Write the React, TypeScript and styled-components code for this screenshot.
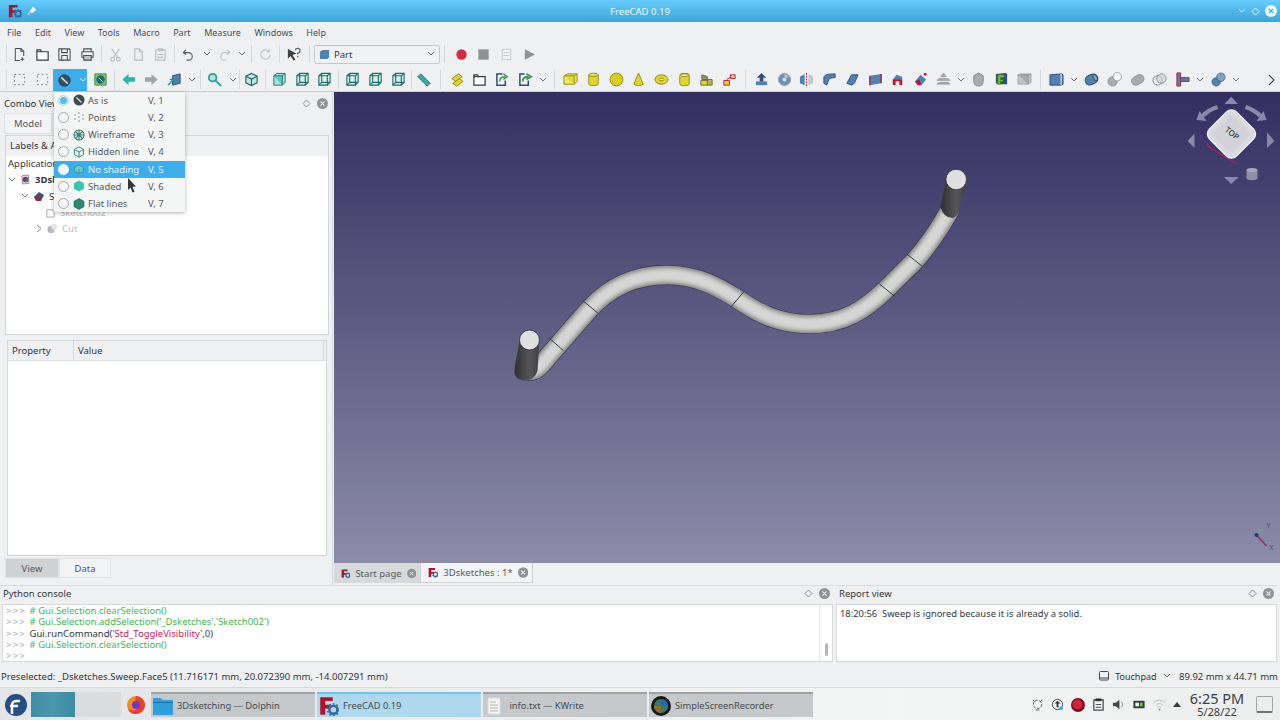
import React from 'react';
import styled, { createGlobalStyle } from 'styled-components';

const GlobalStyle = createGlobalStyle`
  html, body { margin: 0; padding: 0; background: #eff0f1; }
  * { box-sizing: border-box; }
  body { font-family: "Noto Sans", "DejaVu Sans", sans-serif; font-size: 9.5px; color: #31363b; }
`;

const Window = styled.div`
  position: relative;
  width: 1280px;
  height: 720px;
  overflow: hidden;
  display: flex;
  flex-direction: column;
  background: #eff0f1;
`;

const TitleBar = styled.div`
  height: 22px;
  flex-shrink: 0;
  display: flex;
  align-items: center;
  padding: 0 3px 0 8px;
  background: linear-gradient(#66ccfd, #3aa5d6);
  color: #f2fbff;
`;

const TitleText = styled.div`
  flex: 1;
  text-align: center;
  margin-left: 5px;
`;

const TitleButtons = styled.div`
  display: flex;
  align-items: center;
  gap: 5px;
`;

const MenuBar = styled.div`
  height: 21px;
  flex-shrink: 0;
  display: flex;
  align-items: center;
  padding-left: 7px;
  gap: 13.5px;
  font-size: 9px;
`;

const MenuEntry = styled.span`
  color: #4a4f54;
`;

const ToolRow = styled.div<{ $height: number; $lower?: boolean }>`
  height: ${p => p.$height}px;
  flex-shrink: 0;
  display: flex;
  align-items: center;
  padding: ${p => (p.$lower ? '2px 5px 0 4px' : '0 4px 1px 4px')};
  border-bottom: ${p => (p.$lower ? '1px solid #c9ccd0' : 'none')};
`;

const ToolBtn = styled.div`
  width: 22.7px;
  height: 22px;
  flex-shrink: 0;
  display: flex;
  align-items: center;
  justify-content: center;
`;

const ActiveTool = styled.div`
  display: flex;
  align-items: center;
  align-self: stretch;
  margin-top: 1px;
  width: 34px;
  margin-right: 2px;
  background: #3daee9;
`;

const Chevron = styled.div`
  width: 13px;
  flex-shrink: 0;
  display: flex;
  align-items: center;
  justify-content: center;
`;

const ToolSep = styled.div<{ $w: number }>`
  width: ${p => p.$w}px;
  flex-shrink: 0;
  align-self: stretch;
  display: flex;
  justify-content: center;
  padding: 2px 0;

  &::after {
    content: '';
    width: 1px;
    background: #d6d8da;
  }
`;

const MoreArrow = styled.div`
  margin-left: auto;
  display: flex;
`;

const WorkbenchBox = styled.div`
  width: 126px;
  height: 19px;
  flex-shrink: 0;
  display: flex;
  align-items: center;
  gap: 4px;
  padding: 0 4px;
  border: 1px solid #c6c9cc;
  border-radius: 2px;
  background: #f1f2f3;
`;

const WorkbenchName = styled.span`
  flex: 1;
`;

const Workspace = styled.div`
  height: 493px;
  flex-shrink: 0;
  display: flex;
`;

const LeftDock = styled.div`
  width: 333px;
  flex-shrink: 0;
  display: flex;
  flex-direction: column;
  padding: 1px 2px 4px 2px;
  border-right: 1px solid #d8dadc;
`;

const DockHead = styled.div`
  height: 20px;
  flex-shrink: 0;
  display: flex;
  align-items: center;
  padding: 0 2px;
  gap: 6px;
`;

const DockTitle = styled.span`
  flex: 1;
`;

const ModelFrame = styled.div`
  flex: 1;
  display: flex;
  flex-direction: column;
  min-height: 0;
`;

const TabStrip = styled.div`
  height: 22px;
  flex-shrink: 0;
  display: flex;
  margin-left: 2px;
  padding-bottom: 1px;
`;

const PanelTab = styled.div<{ $active?: boolean; $w: number }>`
  width: ${p => p.$w}px;
  display: flex;
  align-items: center;
  justify-content: center;
  background: ${p => (p.$active ? '#f2f3f4' : '#cfd2d3')};
  border: 1px solid #e0e2e4;
  color: #555a5f;
`;

const TreeBox = styled.div`
  height: 200px;
  flex-shrink: 0;
  margin-left: 3px;
  margin-right: 1px;
  display: flex;
  flex-direction: column;
  background: #fff;
  border: 1px solid #d2d4d6;
`;

const TreeHeader = styled.div`
  height: 19.5px;
  flex-shrink: 0;
  display: flex;
  align-items: center;
  padding-left: 4px;
  background: #eff0f1;
`;

const TreeRow = styled.div<{ $indent: number; $faded?: boolean }>`
  height: 16.25px;
  display: flex;
  align-items: center;
  gap: 4px;
  padding-left: ${p => p.$indent}px;
  color: ${p => (p.$faded ? '#b8babc' : '#31363b')};
  white-space: nowrap;
`;

const TreeBold = styled.b`
  font-weight: 700;
`;

const PropertyBox = styled.div`
  height: 216px;
  flex-shrink: 0;
  margin: 5px 3px 0 5px;
  display: flex;
  flex-direction: column;
  background: #fff;
  border: 1px solid #d2d4d6;
`;

const PropertyHead = styled.div`
  height: 20px;
  flex-shrink: 0;
  display: flex;
  background: #eff0f1;
  border-bottom: 1px solid #dfe0e2;
`;

const PropertyCol = styled.div<{ $w: number }>`
  width: ${p => p.$w}px;
  display: flex;
  align-items: center;
  padding-left: 4px;
  border-right: 1px solid #d6d8da;
`;

const BottomTabs = styled.div`
  height: 20px;
  flex-shrink: 0;
  display: flex;
  margin: 2px 0 0 3px;
`;

const CenterColumn = styled.div`
  flex: 1;
  min-width: 0;
  padding-left: 1px;
  display: flex;
  flex-direction: column;
`;

const Viewport = styled.div`
  position: relative;
  height: 471px;
  flex-shrink: 0;
  background: linear-gradient(#332e60, #8c8ca8);
`;

const ViewSvg = styled.svg`
  display: block;
  width: 100%;
  height: 100%;
`;

const DocTabs = styled.div`
  height: 20px;
  display: flex;
`;

const DocTab = styled.div<{ $active?: boolean; $w: number }>`
  width: ${p => p.$w}px;
  display: flex;
  align-items: center;
  gap: 5px;
  padding: 0 4px 0 7px;
  color: #565b60;
  background: ${p => (p.$active ? '#f3f4f5' : '#d7d9db')};
  border-right: 1px solid #d0d2d4;
  border-bottom: ${p => (p.$active ? '1px solid #d0d2d4' : 'none')};
`;

const DocTabName = styled.span`
  flex: 1;
  white-space: nowrap;
`;

const BottomDocks = styled.div`
  height: 77px;
  flex-shrink: 0;
  display: flex;
  gap: 3px;
`;

const BottomPanel = styled.div<{ $w: number }>`
  width: ${p => p.$w}px;
  flex-shrink: 0;
  display: flex;
  flex-direction: column;
  border-top: 1px solid #d8dadc;
`;

const PanelHead = styled(DockHead)`
  height: 18px;
  padding: 0 3px 3px 3px;
`;

const PanelBody = styled.div<{ $inset: number }>`
  flex: 1;
  display: flex;
  margin-left: ${p => p.$inset}px;
  background: #fff;
  border: 1px solid #d6d8da;
  min-height: 0;
`;

const ConsoleText = styled.div`
  flex: 1;
  padding-left: 3px;
  line-height: 11.3px;
  font-size: 9.5px;
  white-space: pre;
`;

const Prompt = styled.span`
  color: #a5a8ab;
  letter-spacing: 1.2px;
`;

const Green = styled.span`
  color: #3fb650;
`;

const Red = styled.span`
  color: #c3235b;
`;

const Navy = styled.span`
  color: #2a3f9d;
`;

const ScrollTrack = styled.div`
  width: 13px;
  flex-shrink: 0;
  display: flex;
  align-items: flex-end;
  justify-content: center;
  padding-bottom: 5px;
  border-left: 1px solid #e4e5e7;
`;

const ScrollThumb = styled.div`
  width: 3px;
  height: 13px;
  border-radius: 2px;
  background: #b4b7ba;
`;

const ReportText = styled.div`
  padding: 2px 3px;
  font-size: 9.4px;
  white-space: pre;
`;

const StatusBar = styled.div`
  height: 26px;
  flex-shrink: 0;
  display: flex;
  align-items: center;
  padding: 3px 2px 0 1px;
  border-bottom: 1px solid #d4d6d8;
`;

const StatusText = styled.span`
  flex: 1;
`;

const StatusRight = styled.div`
  display: flex;
  align-items: center;
  gap: 6px;
`;

const TouchLabel = styled.span`
  font-size: 9px;
`;

const TaskBar = styled.div`
  flex: 1;
  display: flex;
  align-items: stretch;
  padding: 4px 0 3px 3px;
  background: linear-gradient(90deg, #e3e5e6, #f4f5f5 70%, #eceded);
`;

const Launcher = styled.div<{ $w: number }>`
  width: ${p => p.$w}px;
  flex-shrink: 0;
  display: flex;
  align-items: center;
  justify-content: center;
`;

const Pager = styled.div`
  width: 90px;
  margin-left: 3px;
  flex-shrink: 0;
  display: flex;
  background: #d9dbdd;
`;

const PagerActive = styled.div`
  width: 44px;
  background: linear-gradient(90deg, #3f8da6, #4a96ad 50%, #3d8aa3);
`;

const TaskItem = styled.div<{ $active?: boolean }>`
  width: 164px;
  flex-shrink: 0;
  display: flex;
  align-items: center;
  gap: 4px;
  margin-right: 2px;
  padding-left: 2px;
  font-size: 9.3px;
  color: #444a4f;
  background: ${p => (p.$active ? '#b0d8ec' : '#c6c9cb')};
  border-top: 2px solid ${p => (p.$active ? '#72c4ee' : '#a0a3a6')};
`;

const Tray = styled.div`
  margin-left: auto;
  display: flex;
  align-items: center;
  padding-right: 7px;
`;

const TrayIcons = styled.div`
  display: flex;
  align-items: center;
  gap: 7px;
  margin-right: 7px;
`;

const Clock = styled.div`
  width: 58px;
  display: flex;
  flex-direction: column;
  align-items: center;
  margin-top: -2px;
  color: #3b4045;
`;

const ClockTime = styled.span`
  font-size: 14.5px;
  line-height: 14px;
`;

const ClockDate = styled.span`
  font-size: 11px;
  line-height: 11px;
  margin-top: 1px;
`;

const ShowDesktop = styled.div`
  width: 17px;
  height: 17px;
  margin-left: 10px;
  border: 1px solid #a3a6a9;
  border-bottom: 2px solid #6d7174;
  border-radius: 2px;
`;

const DisplayPopup = styled.div`
  position: absolute;
  left: 54px;
  top: 91.5px;
  width: 131px;
  background: #f4f5f5;
  box-shadow: 0 1px 4px rgba(0, 0, 0, 0.3);
  display: flex;
  flex-direction: column;
`;

const PopupRow = styled.div<{ $active?: boolean }>`
  height: 17.25px;
  display: grid;
  grid-template-columns: 15px 15px 60px 1fr;
  align-items: center;
  padding-left: 4px;
  color: ${p => (p.$active ? '#e7f5fc' : '#54595e')};
  background: ${p => (p.$active ? '#3daee9' : 'transparent')};
`;

const Radio = styled.div<{ $on?: boolean; $white?: boolean }>`
  width: 11px;
  height: 11px;
  border-radius: 50%;
  background: ${p => (p.$white ? '#f5f8fa' : p.$on ? '#5dbbe4' : '#f7f7f7')};
  border: 1px solid ${p => (p.$on ? '#bfe2f3' : p.$white ? '#f5f8fa' : '#a4a7aa')};
  box-shadow: ${p => (p.$on ? 'inset 0 0 0 1px #e8f5fb' : 'none')};
`;

const MouseArrow = styled.svg`
  position: absolute;
  left: 127px;
  top: 178px;
  width: 10px;
  height: 15px;
`;

type IconProps = { kind: string; size?: number };

const yellow = '#e3d42c';
const yellowD = '#8f8a1c';
const teal = '#2aa198';
const tealD = '#1f6d69';
const blue = '#4f82b4';
const blueD = '#2f4f74';
const gray = '#a9abad';
const grayD = '#808385';
const crimson = '#b01c3a';

const Icon = ({ kind, size = 15 }: IconProps) => {
  const art: Record<string, React.ReactNode> = {
    doc: <path d="M3.5 1.5h6l3 3v5M3.5 1.5v13h5M9.5 1.5v3h3M11 11v4M9 13h4" fill="none" stroke="#4a4f54" strokeWidth="1.1" />,
    folder: <path d="M2 3h4l1 2h7v9H2zM2 5h5" fill="#fff" stroke="#33383c" strokeWidth="1.2" />,
    save: <g fill="none" stroke="#4a4f54" strokeWidth="1.1"><path d="M2 2h11l1 1v11H2z" /><path d="M5 2v4h6V2M5 14V9h6v5" /></g>,
    print: <g fill="none" stroke="#4a4f54" strokeWidth="1.1"><path d="M4 5V2h8v3M4 11H2V5h12v6h-2" /><path d="M4 9h8v5H4z" fill="#3a3f44" fillOpacity=".25" /></g>,
    cut: <g fill="none" stroke="#b9bbbd" strokeWidth="1.2"><path d="M4 2l6 9M12 2l-6 9" /><circle cx="5" cy="13" r="2" /><circle cx="11" cy="13" r="2" /></g>,
    copy: <g fill="none" stroke="#b9bbbd" strokeWidth="1.2"><path d="M4 2h5l3 3v9H4z" /><path d="M9 2v3h3" /></g>,
    paste: <g fill="none" stroke="#b9bbbd" strokeWidth="1.2"><path d="M3 3h10v11H3z" /><path d="M6 2h4v2H6zM5 8h6M5 11h6" /></g>,
    undo: <path d="M5 3L2.5 6 5.5 8M3 6h5a4 4 0 0 1 0 8H6" fill="none" stroke="#55595d" strokeWidth="1.2" />,
    redo: <path d="M11 3l2.5 3-3 2M13 6H8a4 4 0 0 0 0 8h2" fill="none" stroke="#c1c3c5" strokeWidth="1.2" />,
    refresh: <path d="M13 8a5 5 0 1 1-1.5-3.5M12 2v3H9" fill="none" stroke="#c1c3c5" strokeWidth="1.2" />,
    help: <g><path d="M2 2l9 5-4 1.5 3 5-2 1-3-5-3 3z" fill="#3d4348" /><path d="M10 3.5a2.5 2.5 0 1 1 2.5 3v1.5M12.5 9.5v1.5" fill="none" stroke="#5a6a72" strokeWidth="1.3" /></g>,
    record: <circle cx="8" cy="8" r="5.5" fill="#d8293f" />,
    stop: <rect x="2.5" y="2.5" width="11" height="11" fill="#8f9193" />,
    macro: <g fill="#f4f4f4" stroke="#c3c5c7"><path d="M3.5 2.5h9v11h-9z" /><path d="M5 6h6M5 9h6" /></g>,
    play: <path d="M3 2.5l11 5.5-11 5.5z" fill="#8f9193" />,
    selA: <rect x="2.5" y="2.5" width="11" height="11" fill="none" stroke="#7b7f83" strokeDasharray="2 2.5" />,
    mode: <g><circle cx="8" cy="8" r="6" fill="#3c4f5c" stroke="#24343e" /><path d="M4.5 4.5l7 7" stroke="#d8e8f0" strokeWidth="1.6" /></g>,
    sync: <g><path d="M2 2h12v12H2z" fill="#7ec27a" stroke="#3f8b3f" /><circle cx="8" cy="8" r="4.5" fill="#1f6d69" /><path d="M6 6l5 5" stroke="#bfe" /></g>,
    back: <path d="M8 2L1.5 8 8 14v-3.5h7v-5H8z" fill="#2bb7a4" />,
    forward: <path d="M8 2l6.5 6L8 14v-3.5H1v-5h7z" fill="#a2a4a6" />,
    workbench: <g><path d="M6 4l8-2v10l-8 2z" fill={blue} stroke={blueD} /><path d="M1 14l5-5M3 8h3v3" fill="none" stroke="#1f8f8f" strokeWidth="1.5" /></g>,
    zoom: <g fill="none" stroke={teal} strokeWidth="2"><circle cx="6" cy="6" r="4" fill="#b2e5df" /><path d="M9 9l6 6" /></g>,
    iso: <g fill="none" stroke={tealD} strokeWidth="1.2"><path d="M8 1.5l6 3v7l-6 3-6-3v-7z" fill="#bfe6e1" /><path d="M2 4.5l6 3 6-3M8 7.5v7" /></g>,
    front: <g stroke={tealD} strokeWidth="1"><path d="M2 4l3-2.5h9V11l-3 3H2z" fill="#a8e6de" /><path d="M2 4h9v10M11 4l3-2.5" fill="#57cabd" /></g>,
    wire: <g fill="none" stroke={tealD} strokeWidth="1.2"><path d="M2 4l3-2.5h9V11l-3 3H2z" fill="#d5f2ee" /><path d="M2 4h9v10M11 4l3-2.5M5 1.5V11H14M5 11l-3 3" /></g>,
    ruler: <g><path d="M2 5l3-3 10 10-3 3z" fill="#37b0a6" stroke={tealD} /></g>,
    part: <g stroke={yellowD}><path d="M2 7l7-5 4 3-7 5z" fill={yellow} /><path d="M3 12l7-5 4 3-7 5z" fill={yellow} /></g>,
    group: <g fill="none" stroke="#34393d" strokeWidth="1.3"><path d="M2 3h4l1 2h7v9H2z" fill="#fff" /><path d="M2 5h5" /></g>,
    link: <g fill="none" stroke={blueD} strokeWidth="1.6"><path d="M11 9v5H2V2h6" /><path d="M5 10c0-4 3-5 6-5M9 2l4 3-4 3" stroke="#3e9a5a" /></g>,
    link2: <g fill="none" stroke={blueD} strokeWidth="1.6"><path d="M11 9v5H2V2h5" /><path d="M5 10c0-4 3-5 6-5M9 2l5 3-5 3" stroke="#3e9a5a" strokeWidth="2" /></g>,
    box: <g stroke={yellowD}><path d="M1 4l4-2h10v8l-3 3H1z" fill="#f2e85a" /><path d="M1 4h11v9M12 4l3-2" fill="#e4d533" /></g>,
    cyl: <g stroke={yellowD}><path d="M3 3v10c0 2 10 2 10 0V3z" fill={yellow} /><ellipse cx="8" cy="3" rx="5" ry="1.7" fill="#f2e85a" /></g>,
    sphere: <circle cx="8" cy="8" r="6.8" fill="#dccb24" stroke={yellowD} />,
    cone: <path d="M8 1l5 12c-2 2-8 2-10 0z" fill={yellow} stroke={yellowD} />,
    torus: <g><ellipse cx="8" cy="8" rx="7" ry="5" fill={yellow} stroke={yellowD} /><ellipse cx="8" cy="8" rx="2.5" ry="1.3" fill="#f4f4e4" stroke={yellowD} /></g>,
    tube: <g stroke={yellowD}><rect x="3" y="1.5" width="10" height="13" rx="2.5" fill={yellow} /><ellipse cx="8" cy="3.5" rx="4" ry="1.4" fill="#fff9b0" /></g>,
    prims: <g stroke="#6b6a3a"><path d="M2 9h7v5H2z" fill={yellow} /><path d="M9 8h5v6H9z" fill="#b9b35a" /><path d="M3 3l6 2v3H3z" fill="#8f8f7a" /></g>,
    shapes: <g stroke={crimson}><path d="M2 9h6v5H2z" fill={yellow} /><path d="M9 3h5v4H9z" fill="#e8d870" /><path d="M5 8l5-3" fill="none" /></g>,
    extrude: <g><path d="M2 10h12v4H2z" fill={blue} /><path d="M8 1l5 5h-3v4H6V6H3z" fill={blueD} /></g>,
    revolve: <g><circle cx="8" cy="8" r="6.5" fill="#6d8fb4" stroke="#92a2b5" /><circle cx="8" cy="8" r="2" fill="#e8ecf0" /><path d="M8 2a6 6 0 0 1 5 3l-5 3z" fill="#b7bfc8" /></g>,
    mirror: <g><path d="M1 5l5-3v12l-5-2z" fill={blue} /><path d="M8 1v14" stroke={crimson} strokeDasharray="2 1" /><path d="M15 5l-5-3v12l5-2z" fill="#c2c6ca" /></g>,
    fillet: <path d="M2 12V6c0-3 4-4 12-4v4c-4 0-7 1-7 3l-2 5z" fill={blue} stroke={blueD} />,
    chamfer: <path d="M2 12l5-9h7l-4 9-3 2z" fill={blue} stroke={blueD} />,
    ruled: <g><path d="M2 4l12-2v10L2 14z" fill={blue} /><path d="M2 4v10M14 2v10" stroke={crimson} strokeWidth="1.5" /></g>,
    loft: <g><path d="M3 8l4-5 6 2v8H3z" fill={blue} /><path d="M3 8h10v6H3z" fill={crimson} /><path d="M6 10h4v4H6z" fill="#f0f0f0" /></g>,
    sweep: <g><path d="M2 10l6-7 6 5-5 6z" fill={blue} /><path d="M2 10l3 4h4l-2-6z" fill={crimson} /><circle cx="13" cy="2.5" r="1.5" fill={crimson} /></g>,
    offset: <g fill={gray} stroke={grayD} strokeWidth=".5"><path d="M8 1l3 4H5zM3 7h10l2 2H1zM3 11h10l2 2H1z" /></g>,
    thick: <path d="M3 4l5-3 5 3v6c0 3-2 5-5 5s-5-2-5-5z" fill={gray} stroke={grayD} />,
    face: <g><path d="M2 2l10-1 2 1v11H4l-2-1z" fill={blueD} /><path d="M4 3h7v3H7v2h3v2H7v3H4z" fill="#6fc22c" stroke="#2a5a10" strokeWidth=".5" /></g>,
    graybox: <g stroke={grayD} strokeWidth=".6"><path d="M1 3l3-1h11v9l-3 2H1z" fill="#c3c4c6" /><path d="M1 3h11v10M12 3l3-1" fill="#a6a8aa" /></g>,
    bluebox: <g><path d="M1 3l12-1 2 1v10l-2 1H1z" fill={blue} stroke={blueD} /><path d="M13 2v12" stroke="#c4ccd4" strokeWidth="1.5" /></g>,
    bool: <g stroke={blueD}><rect x="1" y="3" width="14" height="10" rx="5" transform="rotate(-25 8 8)" fill={blue} /><ellipse cx="12" cy="6" rx="2" ry="3.5" transform="rotate(-25 12 6)" fill="#7fa3c6" /></g>,
    cutB: <g stroke={grayD} strokeWidth=".7"><circle cx="6" cy="10" r="5" fill={gray} /><circle cx="11" cy="5" r="4.5" fill="#f6f6f6" /></g>,
    union: <g><rect x="1" y="4" width="14" height="9" rx="4.5" transform="rotate(-30 8 8)" fill={gray} stroke={grayD} strokeWidth=".7" /></g>,
    common: <g fill="none" stroke={grayD}><circle cx="6" cy="9" r="5" /><circle cx="10" cy="7" r="5" fill="#c7c9cb" fillOpacity=".5" /></g>,
    tee: <g><path d="M2 1h4v14H2z" fill={blue} stroke={crimson} /><path d="M6 6h9v4H6z" fill={blue} stroke={crimson} /></g>,
    joined: <g stroke={blueD} strokeWidth=".7"><circle cx="5.5" cy="10.5" r="4.5" fill={blue} /><circle cx="10.5" cy="5.5" r="4.5" fill="#7fa3c6" /></g>,
  };
  return (
    <svg width={size} height={size} viewBox="0 0 16 16">
      {art[kind]}
    </svg>
  );
};

const ChevronGlyph = ({ color = '#6f7477' }: { color?: string }) => (
  <svg width="8" height="6" viewBox="0 0 8 6">
    <path d="M1 1l3 3 3-3" fill="none" stroke={color} strokeWidth="1" />
  </svg>
);

const CloseDot = ({ size = 11, fill = '#909396', cross = '#eff0f1' }: { size?: number; fill?: string; cross?: string }) => (
  <svg width={size} height={size} viewBox="0 0 12 12">
    <circle cx="6" cy="6" r="6" fill={fill} />
    <path d="M3.8 3.8l4.4 4.4M8.2 3.8l-4.4 4.4" stroke={cross} strokeWidth="1.2" />
  </svg>
);

const FloatDiamond = ({ color = '#8e9194' }: { color?: string }) => (
  <svg width="9" height="9" viewBox="0 0 9 9">
    <path d="M4.5 1l3.5 3.5-3.5 3.5L1 4.5z" fill="none" stroke={color} />
  </svg>
);

const FreeCadLogo = ({ size = 14 }: { size?: number }) => (
  <svg width={size} height={size} viewBox="0 0 16 16">
    <path d="M1 1h10v3H5v3h4v3H5v5H1z" fill="#a8152f" />
    <circle cx="11.5" cy="11" r="3.2" fill="none" stroke="#36689a" strokeWidth="2" />
    <circle cx="11.5" cy="11" r="4.7" fill="none" stroke="#36689a" strokeWidth="1.2" strokeDasharray="1.5 1.5" />
  </svg>
);

const toolsTop: (string | number)[] = [
  4, 'doc', 'folder', 'save', 'print', 5.3, 'cut', 'copy', 'paste', 5.3, 'undo', 'v', 'redo', 'v', 5, 'refresh', 5.3, 'help', 9.5,
];
const toolsPlay = ['record', 'stop', 'macro', 'play'];
const toolsLeft: (string | number)[] = [4, 'selA', 'selA'];
const toolsMain: (string | number)[] = [
  'sync', 5.3, 'back', 'forward', 'workbench', 'v', 5, 'zoom', 'v', 1, 'iso', 5.3,
  'front', 'wire', 'wire', 5.3, 'wire', 'wire', 'wire', 3, 'ruler', 10.5,
  'part', 'group', 'link', 'link2', 'v', 10, 'box', 'cyl', 'sphere', 'cone', 'torus', 'tube', 'prims', 'shapes', 9.3,
  'extrude', 'revolve', 'mirror', 'fillet', 'chamfer', 'ruled', 'loft', 'sweep', 'offset', 'v', 'thick', 'face', 'graybox', 9.3,
  'bluebox', 'v', 'bool', 'cutB', 'union', 'common', 'tee', 'v', 'joined', 'v',
];

const renderTools = (items: (string | number)[]) =>
  items.map((it, i) => {
    if (typeof it === 'number') return <ToolSep key={i} $w={it} />;
    if (it === 'v') return <Chevron key={i}><ChevronGlyph /></Chevron>;
    return <ToolBtn key={i}><Icon kind={it} /></ToolBtn>;
  });

const MENU = ['File', 'Edit', 'View', 'Tools', 'Macro', 'Part', 'Measure', 'Windows', 'Help'];

const DISPLAY_MODES = [
  { icon: 'asis', label: 'As is', key: 'V, 1' },
  { icon: 'points', label: 'Points', key: 'V, 2' },
  { icon: 'wireframe', label: 'Wireframe', key: 'V, 3' },
  { icon: 'hidden', label: 'Hidden line', key: 'V, 4' },
  { icon: 'noshade', label: 'No shading', key: 'V, 5' },
  { icon: 'shaded', label: 'Shaded', key: 'V, 6' },
  { icon: 'flat', label: 'Flat lines', key: 'V, 7' },
];

const ModeGlyph = ({ kind }: { kind: string }) => (
  <svg width="12" height="12" viewBox="0 0 12 12">
    {kind === 'asis' && <g><circle cx="6" cy="6" r="5.5" fill="#3d4a50" /><path d="M3.5 3.5l5 5" stroke="#d5e0e4" strokeWidth="1.2" /></g>}
    {kind === 'points' && <path d="M6 1v2M6 5v2M6 9v2M1 4h2M1 8h2M9 4h2M9 8h2" stroke="#8a9da0" strokeWidth="1" />}
    {kind === 'wireframe' && <g fill="none" stroke="#2f7d70" strokeWidth="1.1"><circle cx="6" cy="6" r="5" /><path d="M1 6h10M6 1v10M2.5 2.5l7 7M9.5 2.5l-7 7" /></g>}
    {kind === 'hidden' && <g fill="none" stroke="#2f8d80" strokeWidth="1"><path d="M6 .8l4.6 2.6v5.2L6 11.2 1.4 8.6V3.4z" /><path d="M1.4 3.4L6 6l4.6-2.6M6 6v5.2" /></g>}
    {kind === 'noshade' && <g fill="none" stroke="#2d9a9a" strokeWidth="1"><path d="M6 2l4.6 2.2v4L6 10.5 1.4 8.2v-4z" fill="#6ccbd0" /><path d="M6 6v4.5" /></g>}
    {kind === 'shaded' && <path d="M6 .5l5 2.8v5.4l-5 2.8-5-2.8V3.3z" fill="#3ac5ad" />}
    {kind === 'flat' && <path d="M6 .5l5 2.8v5.4l-5 2.8-5-2.8V3.3z" fill="#2a8a6e" stroke="#1d6a55" strokeWidth=".6" />}
  </svg>
);

const Scene = () => {
  const spine = 'M531 372 C538 371 543 365 549 357 L590 310 C610 288 635 276 667 276 C700 276 722 290 738 300 C760 315 780 325 810 325 C845 325 866 310 887 290 L915 262 C925 251 938 233 950 212';
  return (
    <ViewSvg viewBox="335 93 945 471">
      <defs>
        <linearGradient id="capBody" x1="0" x2="1" y1="0" y2="0">
          <stop offset="0" stopColor="#2f2f33" />
          <stop offset="0.6" stopColor="#565659" />
          <stop offset="1" stopColor="#414145" />
        </linearGradient>
        <filter id="soft" x="-5%" y="-5%" width="110%" height="110%">
          <feGaussianBlur stdDeviation="1.6" />
        </filter>
      </defs>
      <g fill="none" strokeLinecap="round">
        <path d={spine} stroke="#33334a" strokeWidth="20" />
        <path d={spine} stroke="#8b8b8c" strokeWidth="18.5" />
        <g filter="url(#soft)">
          <path d={spine} stroke="#b9b9b8" strokeWidth="15" />
          <path d={spine} stroke="#d6d6d5" strokeWidth="10" />
        </g>
      </g>
      <g stroke="#25252c" strokeWidth="0.9">
        <path d="M550 339.3L564 351.7M583.3 301.7L598.3 314M744.3 292.7L731.7 307.7M880 285L895.3 297.3M907.3 255L922.7 267.3" />
      </g>
      <path d="M520 342L515 370Q514 381 526 381.5Q535 381 538 372L540 342Z" fill="url(#capBody)" />
      <circle cx="530" cy="341" r="10" fill="#dfdfdf" stroke="#2d2d33" strokeWidth="0.8" />
      <path d="M946 183L941 208Q944 219 953 219Q959 217 960 210L967 183Z" fill="url(#capBody)" />
      <circle cx="956.7" cy="180.5" r="10.3" fill="#dfdfdf" stroke="#2d2d33" strokeWidth="0.8" />

      <g fill="#8b88ad">
        <path d="M1225 105L1231.7 97.7 1238.5 105Z" />
        <path d="M1188 142L1195 134.5 1195 149Z" />
        <path d="M1275 142L1267.5 133.5 1267.5 149Z" />
        <path d="M1224.5 178L1239 178 1231.7 185Z" />
        <path d="M1197 121L1207 122 1200 112Z" />
        <path d="M1267 121L1257 122 1264 112Z" />
      </g>
      <g fill="none" stroke="#8b88ad" strokeWidth="4">
        <path d="M1203 117Q1209 111 1218 108" />
        <path d="M1261 117Q1255 111 1246 108" />
      </g>
      <path d="M1200 134L1210 148 1237 165" fill="none" stroke="#8a2a62" strokeWidth="2" />
      <path d="M1201 134L1208 144" fill="none" stroke="#2c2f9c" strokeWidth="2" />
      <rect x="1213" y="116" width="38" height="38" rx="7" transform="rotate(45 1232 135)" fill="#d9d9df" stroke="#f0eff5" strokeWidth="1.5" />
      <rect x="1218" y="121" width="28" height="28" rx="4" transform="rotate(45 1232 135)" fill="#d2d2d8" />
      <text x="1232" y="137" fontSize="8" fontFamily="Noto Sans, sans-serif" textAnchor="middle" fill="#111" transform="rotate(38 1232 135)">TOP</text>
      <path d="M1247 171v8c0 3 11 3 11 0v-8z" fill="#8f8fa6" />
      <ellipse cx="1252.5" cy="171" rx="5.5" ry="2" fill="#a9a9bb" />

      <path d="M1257 536L1263 530" stroke="#6faa78" strokeWidth="2" />
      <path d="M1257 536L1267 547" stroke="#8f2f5c" strokeWidth="1.5" />
      <circle cx="1257" cy="536" r="2" fill="#2b2f88" />
      <text x="1267" y="529" fontSize="7" fontFamily="Noto Sans, sans-serif" fill="#4c4c62">Y</text>
      <text x="1270" y="551" fontSize="7" fontFamily="Noto Sans, sans-serif" fill="#4c4c62">X</text>
    </ViewSvg>
  );
};

export default function App() {
  return (
    <Window>
      <GlobalStyle />
      <TitleBar>
        <FreeCadLogo />
        <svg width="10" height="10" viewBox="0 0 10 10" style={{ marginLeft: 5 }}>
          <path d="M6 1l3 3-2 1-2 2-2-2 2-2zM3 6L1 9" fill="#e8f6fd" stroke="#e8f6fd" />
        </svg>
        <TitleText>FreeCAD 0.19</TitleText>
        <TitleButtons>
          <ChevronGlyph color="#e4f6ff" />
          <FloatDiamond color="#e4f6ff" />
          <CloseDot size={12} fill="#eaf7fd" cross="#3aa5d6" />
        </TitleButtons>
      </TitleBar>

      <MenuBar>
        {MENU.map(m => <MenuEntry key={m}>{m}</MenuEntry>)}
      </MenuBar>

      <ToolRow $height={23}>
        {renderTools(toolsTop)}
        <WorkbenchBox>
          <svg width="11" height="11" viewBox="0 0 12 12"><path d="M1 3l3-2h7v8l-2 2H1z" fill="#4f82b4" /></svg>
          <WorkbenchName>Part</WorkbenchName>
          <ChevronGlyph />
        </WorkbenchBox>
        <ToolSep $w={10} />
        {renderTools(toolsPlay)}
      </ToolRow>

      <ToolRow $height={26} $lower>
        {renderTools(toolsLeft)}
        <ActiveTool>
          <ToolBtn><Icon kind="mode" /></ToolBtn>
          <Chevron><ChevronGlyph color="#e8f6fd" /></Chevron>
        </ActiveTool>
        {renderTools(toolsMain)}
        <MoreArrow>
          <svg width="8" height="12" viewBox="0 0 8 12"><path d="M2 1l5 5-5 5" fill="none" stroke="#44494d" strokeWidth="1.2" /></svg>
        </MoreArrow>
      </ToolRow>

      <Workspace>
        <LeftDock>
          <DockHead>
            <DockTitle>Combo View</DockTitle>
            <FloatDiamond />
            <CloseDot />
          </DockHead>
          <ModelFrame>
            <TabStrip>
              <PanelTab $active $w={48}>Model</PanelTab>
              <PanelTab $active $w={48}>Tasks</PanelTab>
            </TabStrip>
            <TreeBox>
              <TreeHeader>Labels &amp; Attributes</TreeHeader>
              <TreeRow $indent={2}>Application</TreeRow>
              <TreeRow $indent={2}>
                <ChevronGlyph />
                <svg width="11" height="11" viewBox="0 0 12 12"><path d="M2 2l7-1 1 9-7 1z" fill="#e4e6ea" stroke="#889" /><circle cx="6" cy="6" r="3" fill="#a01c3c" /><circle cx="7" cy="7" r="2" fill="#3c6ca0" /></svg>
                <TreeBold>3Dsketches</TreeBold>
              </TreeRow>
              <TreeRow $indent={15}>
                <ChevronGlyph />
                <svg width="12" height="11" viewBox="0 0 12 11"><path d="M1 6l5-5 5 3-3 6H3z" fill="#3c4f80" /><path d="M1 6l3 4h4L6 5z" fill="#b01c3a" /></svg>
                Sweep
              </TreeRow>
              <TreeRow $indent={39} $faded>
                <svg width="11" height="11" viewBox="0 0 12 12"><path d="M2 3h6l2 2v6H2z" fill="none" stroke="#a0a2a4" /></svg>
                Sketch002
              </TreeRow>
              <TreeRow $indent={30} $faded>
                <svg width="7" height="9" viewBox="0 0 7 9"><path d="M1 1l4 3.5-4 3.5" fill="none" stroke="#808386" /></svg>
                <svg width="11" height="11" viewBox="0 0 12 12"><circle cx="4.5" cy="7" r="4" fill="#b6b8ba" /><circle cx="8" cy="4" r="3.3" fill="#e6e7e8" /></svg>
                Cut
              </TreeRow>
            </TreeBox>
            <PropertyBox>
              <PropertyHead>
                <PropertyCol $w={66}>Property</PropertyCol>
                <PropertyCol $w={250}>Value</PropertyCol>
              </PropertyHead>
            </PropertyBox>
            <BottomTabs>
              <PanelTab $w={54}>View</PanelTab>
              <PanelTab $active $w={52}>Data</PanelTab>
            </BottomTabs>
          </ModelFrame>
        </LeftDock>

        <CenterColumn>
          <Viewport>
            <Scene />
          </Viewport>
          <DocTabs>
            <DocTab $w={87}>
              <FreeCadLogo size={11} />
              <DocTabName>Start page</DocTabName>
              <CloseDot />
            </DocTab>
            <DocTab $active $w={112}>
              <FreeCadLogo size={11} />
              <DocTabName>3Dsketches : 1*</DocTabName>
              <CloseDot />
            </DocTab>
          </DocTabs>
        </CenterColumn>
      </Workspace>

      <BottomDocks>
        <BottomPanel $w={833}>
          <PanelHead>
            <DockTitle>Python console</DockTitle>
            <FloatDiamond />
            <CloseDot />
          </PanelHead>
          <PanelBody $inset={2}>
            <ConsoleText>
              <div><Prompt>&gt;&gt;&gt; </Prompt><Green># Gui.Selection.clearSelection()</Green></div>
              <div><Prompt>&gt;&gt;&gt; </Prompt><Green># Gui.Selection.addSelection('_Dsketches','Sketch002')</Green></div>
              <div><Prompt>&gt;&gt;&gt; </Prompt>Gui.runCommand(<Red>'Std_ToggleVisibility'</Red>,<Navy>0</Navy>)</div>
              <div><Prompt>&gt;&gt;&gt; </Prompt><Green># Gui.Selection.clearSelection()</Green></div>
              <div><Prompt>&gt;&gt;&gt; </Prompt></div>
            </ConsoleText>
            <ScrollTrack><ScrollThumb /></ScrollTrack>
          </PanelBody>
        </BottomPanel>
        <BottomPanel $w={441}>
          <PanelHead>
            <DockTitle>Report view</DockTitle>
            <FloatDiamond />
            <CloseDot />
          </PanelHead>
          <PanelBody $inset={0}>
            <ReportText>18:20:56  Sweep is ignored because it is already a solid.</ReportText>
          </PanelBody>
        </BottomPanel>
      </BottomDocks>

      <StatusBar>
        <StatusText>Preselected: _Dsketches.Sweep.Face5 (11.716171 mm, 20.072390 mm, -14.007291 mm)</StatusText>
        <StatusRight>
          <svg width="10" height="10" viewBox="0 0 10 10"><rect x=".5" y=".5" width="9" height="8.5" rx="1" fill="none" stroke="#44494d" /><path d="M1 7h8" stroke="#44494d" /></svg>
          <TouchLabel>Touchpad</TouchLabel>
          <ChevronGlyph />
          <span>&nbsp;89.92 mm x 44.71 mm</span>
        </StatusRight>
      </StatusBar>

      <TaskBar>
        <Launcher $w={25}>
          <svg width="24" height="24" viewBox="0 0 24 24">
            <circle cx="12" cy="12" r="11" fill="#274d86" />
            <path d="M8 21v-9a4 4 0 0 1 4-4h4M6 13h8" fill="none" stroke="#fff" strokeWidth="2.5" />
          </svg>
        </Launcher>
        <Pager><PagerActive /></Pager>
        <Launcher $w={30}>
          <svg width="20" height="20" viewBox="0 0 20 20">
            <circle cx="10" cy="10" r="9" fill="#f28a1f" />
            <path d="M10 1a9 9 0 0 1 9 9c0 5-4 9-9 9-4 0-7-2-8-5 3 2 8 2 10-1 1-3-1-5-3-5z" fill="#e8402e" />
            <circle cx="10" cy="10" r="4" fill="#6a3bbf" />
          </svg>
        </Launcher>
        <TaskItem>
          <svg width="20" height="18" viewBox="0 0 20 18"><path d="M0 1h8l2 2h10v15H0z" fill="#2e9fd8" /><path d="M0 5h20v1H0z" fill="#1c6d98" /></svg>
          <span>3Dsketching — Dolphin</span>
        </TaskItem>
        <TaskItem $active>
          <FreeCadLogo size={20} />
          <span>FreeCAD 0.19</span>
        </TaskItem>
        <TaskItem>
          <svg width="18" height="18" viewBox="0 0 18 18"><path d="M3 1h12v16H3z" fill="#f4f4f4" stroke="#dcdcdc" /><path d="M5 5h6M5 8h8M5 11h8M5 14h8" stroke="#b8babc" /></svg>
          <span>&nbsp;info.txt  — KWrite</span>
        </TaskItem>
        <TaskItem>
          <svg width="20" height="20" viewBox="0 0 20 20"><circle cx="10" cy="10" r="10" fill="#16191c" /><circle cx="10" cy="10" r="7" fill="#2d7f6a" /><path d="M10 3a7 7 0 0 1 7 7h-7z" fill="#2e62b0" /><path d="M3 10a7 7 0 0 0 7 7v-7z" fill="#9a6a2a" /></svg>
          <span>SimpleScreenRecorder</span>
        </TaskItem>
        <Tray>
          <TrayIcons>
            <svg width="13" height="13" viewBox="0 0 14 14"><circle cx="7" cy="7" r="4.5" fill="none" stroke="#5b6064" strokeDasharray="3 1.5" /><path d="M2 2L4 4M12 2L10 4M5 13h4" stroke="#5b6064" /></svg>
            <svg width="13" height="13" viewBox="0 0 14 14"><circle cx="7" cy="7" r="5.5" fill="none" stroke="#44494d" /><path d="M7 3l3 3H8v4H6V6H4z" fill="#33383c" /><circle cx="11" cy="11" r="2" fill="#3daee9" /></svg>
            <svg width="14" height="14" viewBox="0 0 14 14"><circle cx="7" cy="7" r="7" fill="#7a0c22" /><circle cx="6.5" cy="6.5" r="5" fill="#d0203a" /></svg>
            <svg width="13" height="13" viewBox="0 0 14 14"><path d="M2 2h10v11H2z" fill="none" stroke="#44494d" strokeWidth="1.3" /><path d="M4 1h6v2H4zM4 7h6M4 10h6" stroke="#44494d" /></svg>
            <svg width="13" height="13" viewBox="0 0 14 14"><path d="M1 5h3l4-3v10l-4-3H1z" fill="#44494d" /><path d="M10 4a4 4 0 0 1 0 6" fill="none" stroke="#8a8d90" /></svg>
            <svg width="14" height="13" viewBox="0 0 14 14"><rect x="1" y="3" width="12" height="8" fill="#33383c" /><rect x="8" y="5" width="3" height="4" fill="#6fc24a" /><rect x="3" y="5" width="4" height="4" fill="#eff0f1" /></svg>
            <svg width="13" height="13" viewBox="0 0 14 14"><path d="M1 5a8 8 0 0 1 12 0M3 8a5 5 0 0 1 8 0M5 10.5a2.5 2.5 0 0 1 4 0" fill="none" stroke="#b3b6b8" /><circle cx="7" cy="12.5" r="1" fill="#808386" /></svg>
            <svg width="8" height="5" viewBox="0 0 8 5"><path d="M4 0l4 5H0z" fill="#33383c" /></svg>
          </TrayIcons>
          <Clock>
            <ClockTime>6:25 PM</ClockTime>
            <ClockDate>5/28/22</ClockDate>
          </Clock>
          <ShowDesktop />
        </Tray>
      </TaskBar>

      <DisplayPopup>
        {DISPLAY_MODES.map((m, i) => (
          <PopupRow key={m.label} $active={i === 4}>
            <Radio $on={i === 0} $white={i === 4} />
            <ModeGlyph kind={m.icon} />
            <span>{m.label}</span>
            <span>{m.key}</span>
          </PopupRow>
        ))}
      </DisplayPopup>
      <MouseArrow viewBox="0 0 10 15">
        <path d="M1 0l8 8.5-3.5.3 2 5-2 .8-2-5L1 12z" fill="#33373b" />
      </MouseArrow>
    </Window>
  );
}
